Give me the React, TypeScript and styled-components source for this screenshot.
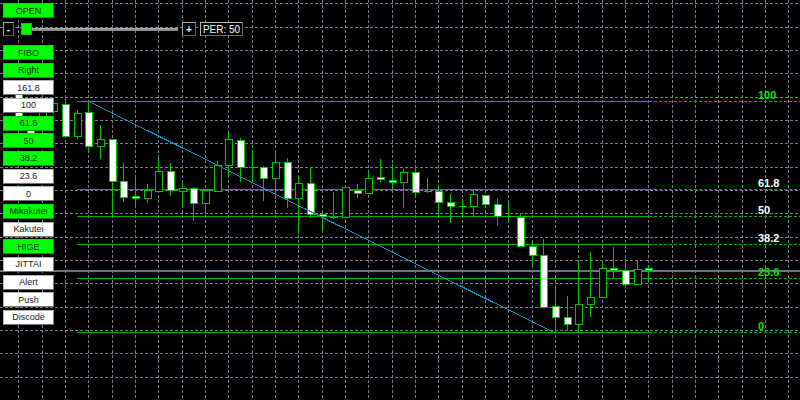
import styled, { createGlobalStyle } from 'styled-components';

type Candle = { hi: number; lo: number; top: number; bot: number; white: boolean };

// body tops/bottoms in screen pixels, index = bar number from the left edge
const CANDLES: Candle[] = [
  { hi: 80, lo: 120, top: 84, bot: 116, white: true },
  { hi: 115, lo: 145, top: 120, bot: 140, white: true },
  { hi: 98, lo: 125, top: 102, bot: 120, white: false },
  { hi: 98, lo: 114, top: 103, bot: 111, white: false },
  { hi: 98, lo: 138, top: 104, bot: 136, white: true },
  { hi: 110, lo: 139, top: 113, bot: 136, white: false },
  { hi: 102, lo: 152, top: 112, bot: 146, white: true },
  { hi: 125, lo: 159, top: 139, bot: 146, white: false },
  { hi: 139, lo: 217, top: 139, bot: 181, white: true },
  { hi: 163, lo: 202, top: 181, bot: 197, white: true },
  { hi: 176, lo: 207, top: 196, bot: 198, white: true },
  { hi: 184, lo: 203, top: 190, bot: 198, white: false },
  { hi: 158, lo: 191, top: 171, bot: 191, white: false },
  { hi: 163, lo: 196, top: 171, bot: 190, white: true },
  { hi: 183, lo: 208, top: 188, bot: 191, white: false },
  { hi: 187, lo: 221, top: 188, bot: 203, white: true },
  { hi: 190, lo: 210, top: 190, bot: 203, white: false },
  { hi: 161, lo: 192, top: 165, bot: 191, white: false },
  { hi: 132, lo: 178, top: 139, bot: 165, white: false },
  { hi: 138, lo: 182, top: 140, bot: 167, white: true },
  { hi: 150, lo: 182, top: 167, bot: 167, white: false },
  { hi: 166, lo: 201, top: 167, bot: 178, white: true },
  { hi: 153, lo: 199, top: 162, bot: 178, white: false },
  { hi: 158, lo: 208, top: 162, bot: 198, white: true },
  { hi: 175, lo: 234, top: 183, bot: 198, white: false },
  { hi: 168, lo: 218, top: 183, bot: 214, white: true },
  { hi: 212, lo: 230, top: 214, bot: 216, white: true },
  { hi: 192, lo: 219, top: 217, bot: 217, white: false },
  { hi: 185, lo: 217, top: 187, bot: 217, white: false },
  { hi: 184, lo: 198, top: 190, bot: 193, white: true },
  { hi: 172, lo: 193, top: 178, bot: 193, white: false },
  { hi: 159, lo: 182, top: 177, bot: 179, white: true },
  { hi: 164, lo: 190, top: 180, bot: 182, white: true },
  { hi: 169, lo: 208, top: 172, bot: 182, white: false },
  { hi: 167, lo: 195, top: 172, bot: 192, white: true },
  { hi: 178, lo: 193, top: 191, bot: 191, white: false },
  { hi: 185, lo: 216, top: 191, bot: 202, white: true },
  { hi: 194, lo: 223, top: 202, bot: 206, white: true },
  { hi: 199, lo: 217, top: 206, bot: 206, white: false },
  { hi: 190, lo: 217, top: 194, bot: 206, white: false },
  { hi: 195, lo: 208, top: 195, bot: 204, white: true },
  { hi: 198, lo: 226, top: 204, bot: 216, white: true },
  { hi: 203, lo: 222, top: 216, bot: 216, white: false },
  { hi: 214, lo: 246, top: 217, bot: 246, white: true },
  { hi: 242, lo: 265, top: 246, bot: 255, white: true },
  { hi: 239, lo: 307, top: 255, bot: 307, white: true },
  { hi: 285, lo: 333, top: 306, bot: 317, white: true },
  { hi: 296, lo: 331, top: 317, bot: 324, white: true },
  { hi: 262, lo: 333, top: 304, bot: 324, white: false },
  { hi: 252, lo: 317, top: 297, bot: 304, white: false },
  { hi: 263, lo: 297, top: 268, bot: 297, white: false },
  { hi: 247, lo: 278, top: 268, bot: 270, white: true },
  { hi: 259, lo: 284, top: 270, bot: 284, white: true },
  { hi: 260, lo: 284, top: 269, bot: 284, white: false },
  { hi: 268, lo: 282, top: 268, bot: 270, white: true },
];

const FIBO_LEVELS = [
  { label: '100', y: 101, color: '#00e600' },
  { label: '61.8', y: 189, color: '#ffffff' },
  { label: '50', y: 216, color: '#ffffff' },
  { label: '38.2', y: 244, color: '#ffffff' },
  { label: '23.6', y: 278, color: '#00e600' },
  { label: '0', y: 332, color: '#00e600' },
];

const PANEL_BUTTONS: { label: string; on: boolean }[] = [
  { label: 'FIBO', on: true },
  { label: 'Right', on: true },
  { label: '161.8', on: false },
  { label: '100', on: false },
  { label: '61.8', on: true },
  { label: '50', on: true },
  { label: '38.2', on: true },
  { label: '23.6', on: false },
  { label: '0', on: false },
  { label: 'Mikakutei', on: true },
  { label: 'Kakutei', on: false },
  { label: 'HIGE', on: true },
  { label: 'JITTAI', on: false },
  { label: 'Alert', on: false },
  { label: 'Push', on: false },
  { label: 'Discode', on: false },
];

const GRID_STEP = 70 / 3;
const BAR_STEP = 35 / 3;

export default function App() {
  const vLines = Array.from({ length: 35 }, (_, k) => Math.floor(18.67 + GRID_STEP * k) + 0.5);
  const hLines = Array.from({ length: 17 }, (_, k) => Math.floor(3.67 + GRID_STEP * k) + 0.5);

  return (
    <>
      <GlobalStyle />
      <Screen>
        <Chart width={800} height={400} viewBox='0 0 800 400'>
          <g stroke='#77808f' strokeWidth={1} strokeDasharray='3 2'>
            {vLines.map((x) => (
              <line key={'v' + x} x1={x} y1={0} x2={x} y2={400} />
            ))}
            {hLines.map((y) => (
              <line key={'h' + y} x1={0} y1={y} x2={800} y2={y} />
            ))}
          </g>

          <rect x={0} y={270} width={800} height={2} fill='#6c7380' />

          {FIBO_LEVELS.map((lv) => (
            <g key={lv.label} stroke='#00b000' strokeWidth={1}>
              <line x1={77} y1={lv.y + 0.5} x2={649} y2={lv.y + 0.5} />
              <line x1={649} y1={lv.y + 0.5} x2={800} y2={lv.y + 0.5} strokeDasharray='3 2' />
            </g>
          ))}

          {CANDLES.map((c, j) => {
            const left = Math.round(18.67 + BAR_STEP * j - 3.5);
            const wick = left + 3.5;
            const top = Math.round(c.top);
            const h = Math.round(c.bot) - top;
            return (
              <g key={j} stroke='#00c400' strokeWidth={1}>
                <line x1={wick} y1={c.hi} x2={wick} y2={c.lo} />
                {h < 1 ? (
                  <line x1={left} y1={top + 0.5} x2={left + 8} y2={top + 0.5} />
                ) : (
                  <rect
                    x={left + 0.5}
                    y={top + 0.5}
                    width={7}
                    height={Math.max(h, 2)}
                    fill={c.white ? '#ffffff' : '#000000'}
                  />
                )}
              </g>
            );
          })}

          <line x1={89} y1={101.5} x2={554} y2={332.5} stroke='#1a8cc4' strokeWidth={1} />

          {FIBO_LEVELS.map((lv) => (
            <FiboLabel key={'t' + lv.label} x={758} y={lv.y - 2} fill={lv.color}>
              {lv.label}
            </FiboLabel>
          ))}
        </Chart>

        <Panel>
          <PanelButton $on>OPEN</PanelButton>

          <SliderRow>
            <StepButton $w={11}>-</StepButton>
            <Slider>
              <Thumb />
              <Track />
            </Slider>
            <StepButton $w={14}>+</StepButton>
            <PerBox>PER: 50</PerBox>
          </SliderRow>

          <ButtonList>
            {PANEL_BUTTONS.map((b) => (
              <PanelButton key={b.label} $on={b.on}>
                {b.label}
              </PanelButton>
            ))}
          </ButtonList>
        </Panel>
      </Screen>
    </>
  );
}

const GlobalStyle = createGlobalStyle`
  html, body {
    margin: 0;
    padding: 0;
    background: #000;
    overflow: hidden;
  }
  * {
    box-sizing: border-box;
  }
`;

const Screen = styled.div`
  position: relative;
  width: 800px;
  height: 400px;
  background: #000;
  overflow: hidden;
  font-family: 'Liberation Sans', Arial, sans-serif;
`;

const Chart = styled.svg`
  display: block;
  shape-rendering: crispEdges;
  line {
    shape-rendering: crispEdges;
  }
`;

const FiboLabel = styled.text`
  font-family: 'Liberation Sans', Arial, sans-serif;
  font-size: 11px;
  font-weight: bold;
  shape-rendering: auto;
`;

const Panel = styled.div`
  position: absolute;
  left: 3px;
  top: 3px;
  display: flex;
  flex-direction: column;
`;

const PanelButton = styled.div<{ $on: boolean }>`
  width: 51px;
  height: 15px;
  display: flex;
  align-items: center;
  justify-content: center;
  font-size: 9px;
  color: #222;
  background: ${({ $on }) => ($on ? '#00ff00' : '#ffffff')};
  border: 1px solid ${({ $on }) => ($on ? '#00e000' : '#b4b4b4')};
  border-bottom-color: ${({ $on }) => ($on ? '#009a00' : '#707070')};
  border-right-color: ${({ $on }) => ($on ? '#009a00' : '#808080')};
  white-space: nowrap;
`;

const SliderRow = styled.div`
  display: flex;
  align-items: center;
  margin-top: 4px;
  height: 14px;
`;

const StepButton = styled.div<{ $w: number }>`
  width: ${({ $w }) => $w}px;
  height: 14px;
  display: flex;
  align-items: center;
  justify-content: center;
  background: #000;
  color: #fff;
  font-size: 10px;
  font-weight: bold;
  border: 1px solid #a8a8a8;
  border-bottom-color: #5c5c5c;
  border-right-color: #5c5c5c;
`;

const Slider = styled.div`
  width: 157px;
  margin: 0 4px 0 7px;
  display: flex;
  align-items: center;
`;

const Thumb = styled.div`
  width: 11px;
  height: 12px;
  background: #00ff00;
  border: 1px solid #00c800;
`;

const Track = styled.div`
  flex: 1;
  height: 3px;
  background: #8c8c8c;
  border-top: 1px solid #b0b0b0;
`;

const PerBox = styled.div`
  margin-left: 4px;
  width: 43px;
  height: 14px;
  display: flex;
  align-items: center;
  justify-content: center;
  background: #000;
  color: #fff;
  font-size: 10px;
  border: 1px solid #b8b8b8;
  border-bottom-color: #6c6c6c;
  border-right-color: #6c6c6c;
  white-space: nowrap;
`;

const ButtonList = styled.div`
  display: flex;
  flex-direction: column;
  gap: 2.667px;
  margin-top: 9px;
`;
